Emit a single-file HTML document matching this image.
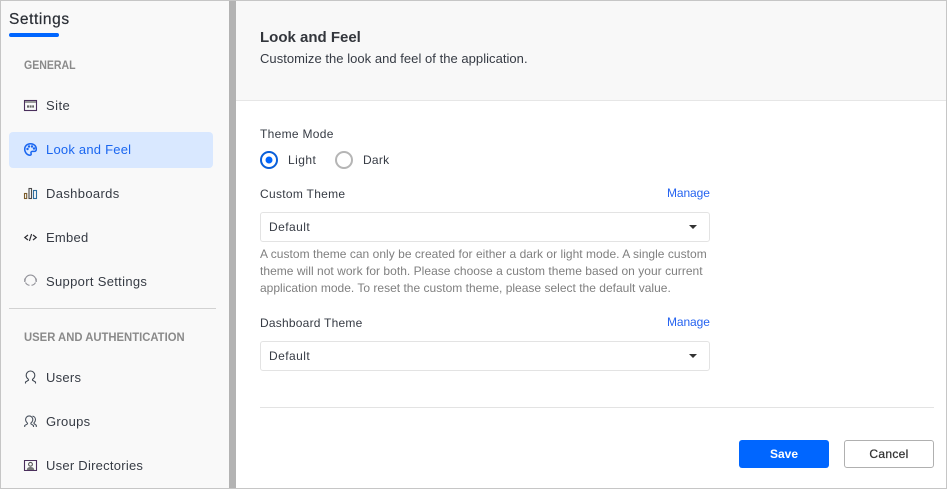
<!DOCTYPE html>
<html><head><meta charset="utf-8"><style>
html,body{margin:0;padding:0;width:947px;height:489px;overflow:hidden;background:#fff}
body{font-family:"Liberation Sans",sans-serif;color:#333;position:relative}
.a{position:absolute;white-space:nowrap}
.t{position:absolute;white-space:nowrap;line-height:16px;font-size:13px;letter-spacing:.3px;color:#363b44}
svg{position:absolute;overflow:visible}
.sel{position:absolute;left:260px;width:448px;height:28px;border:1px solid #e3e3e3;border-radius:3px;background:#fff}
.arr{position:absolute;left:689px;width:0;height:0;border-left:4.5px solid transparent;border-right:4.5px solid transparent;border-top:4.5px solid #333}
</style></head><body>
<div class="a" style="left:1px;top:1px;width:228px;height:487px;background:#f9f9f9"></div>
<div class="a" style="left:229px;top:1px;width:7px;height:487px;background:#b3b3b3"></div>
<div class="a" style="left:236px;top:1px;width:710px;height:99px;background:#f8f8f8"></div>
<div class="a" style="left:236px;top:100px;width:710px;height:1px;background:#e6e6e6"></div>
<div class="a" style="left:0;top:0;width:945px;height:487px;border:1px solid #c6c6c6"></div>

<div class="t" style="left:9px;top:11px;font-size:15.5px;line-height:18px;letter-spacing:.58px;color:#2b2f36;-webkit-text-stroke:.2px #2b2f36">Settings</div>
<div class="a" style="left:9px;top:33px;width:50px;height:4px;border-radius:2px;background:#0066ff"></div>
<div class="t" style="left:24px;top:57px;font-size:12px;font-weight:bold;letter-spacing:0;color:#8a8a8a;transform:scaleX(.88);transform-origin:0 50%">GENERAL</div>
<div class="a" style="left:9px;top:132px;width:204px;height:36px;border-radius:4px;background:#d9e8ff"></div>

<div class="t" style="left:46px;top:98px;letter-spacing:.45px">Site</div>
<div class="t" style="left:46px;top:142px;color:#1a66f0;letter-spacing:.22px">Look and Feel</div>
<div class="t" style="left:46px;top:186px;letter-spacing:.35px">Dashboards</div>
<div class="t" style="left:46px;top:230px;letter-spacing:.25px">Embed</div>
<div class="t" style="left:46px;top:274px;letter-spacing:.32px">Support Settings</div>
<div class="a" style="left:9px;top:308px;width:207px;height:1px;background:#d2d2d2"></div>
<div class="t" style="left:24px;top:329px;font-size:12px;font-weight:bold;letter-spacing:0;color:#8a8a8a;transform:scaleX(.94);transform-origin:0 50%">USER AND AUTHENTICATION</div>
<div class="t" style="left:46px;top:370px;letter-spacing:.25px">Users</div>
<div class="t" style="left:46px;top:414px;letter-spacing:.3px">Groups</div>
<div class="t" style="left:46px;top:458px;letter-spacing:.25px">User Directories</div>

<svg style="left:24px;top:99px" width="13" height="13" viewBox="0 0 13 13" fill="none"><rect x=".5" y="1.500" width="12" height="10" stroke="#4a2f5c" stroke-width="1.100"/><rect x="1" y="2" width="11" height="2" fill="#9a9a9a"/><path d="M3 7.500h7" stroke="#666" stroke-width="2.200" stroke-dasharray="2 .6"/></svg>
<svg style="left:24px;top:143px" width="13" height="13" viewBox="0 0 13 13" fill="none"><path d="M6.500.7C3 .7.7 3.200.7 6.300c0 3.200 2.600 5.900 5.300 5.900 1.400 0 1.300-1.200 1-2-.3-1 .3-1.800 1.400-1.800h1.800c1.300 0 2.100-.9 2.100-2.300C12.300 2.900 9.800.7 6.500.7z" stroke="#1a66f0" stroke-width="1.500"/><circle cx="3.500" cy="6" r="1.200" fill="#1a66f0"/><circle cx="5" cy="3.500" r="1.200" fill="#1a66f0"/><circle cx="8" cy="3.500" r="1.200" fill="#1a66f0"/><circle cx="10" cy="5.500" r="1.200" fill="#1a66f0"/></svg>
<svg style="left:24px;top:187px" width="13" height="13" viewBox="0 0 13 13" fill="none"><rect x=".5" y="6.500" width="2.200" height="5" stroke="#7a5c2c" stroke-width="1.100"/><rect x="5" y="1.500" width="2.500" height="10" stroke="#4a4a4a" stroke-width="1.100"/><rect x="9.500" y="3.500" width="3" height="8" stroke="#2f6f9f" stroke-width="1.100"/></svg>
<svg style="left:24px;top:231px" width="13" height="13" viewBox="0 0 13 13" fill="none" stroke="#2d2d33" stroke-width="1.200"><path d="M4 4 .8 6.500 4 9M9 4l3.200 2.500L9 9M7.600 3 5.400 10"/></svg>
<svg style="left:24px;top:273px" width="13" height="13" viewBox="0 0 13 13" fill="none" stroke="#93939a" stroke-width="1.100"><path d="M1.200 8.500A5.400 5.400 0 1 1 11.800 8.500"/><path d="M.7 5.500v3.500M12.300 5.500v3.500"/><path d="M1.500 9.500c.8 1.600 2.200 2.600 4 2.800M11.500 9.500c-.8 1.600-2.200 2.600-4 2.800"/></svg>
<svg style="left:24px;top:371px" width="13" height="13" viewBox="0 0 13 13" fill="none" stroke="#3f4752" stroke-width="1.100"><path d="M4.500 8.300C2.900 7.300 2.200 5.800 2.200 4.300a4.300 4.300 0 0 1 8.600 0c0 1.500-.7 3-2.300 4v.9l3 1.800v1.500M4.500 8.300v.9l-3 1.800v1.500"/></svg>
<svg style="left:24px;top:415px" width="13" height="13" viewBox="0 0 13 13" fill="none" stroke="#4c5460" stroke-width="1.100"><path d="M3.500 8C2.200 7 1.600 5.800 1.600 4.500a3.600 3.600 0 0 1 7.200 0c0 1.300-.6 2.500-1.900 3.500v.8l2.600 1.700V12M3.500 8v.8L.7 10.500V12"/><path d="M8.500 1.200a3.400 3.400 0 0 1 3 3.400c0 1.200-.5 2.200-1.500 3.200v.8l2.300 1.700V12"/></svg>
<svg style="left:24px;top:459px" width="13" height="13" viewBox="0 0 13 13" fill="none"><path d="M.5 1.500h12v10H.5z" stroke="#4a2f5c" stroke-width="1.100"/><circle cx="6.500" cy="5.300" r="1.900" stroke="#555" stroke-width="1.100"/><path d="M2.800 11c0-2 1.500-3 3.700-3s3.700 1 3.700 3z" fill="#777"/></svg>

<div class="t" style="left:260px;top:29px;font-size:15px;line-height:18px;font-weight:bold;letter-spacing:0;color:#33363c">Look and Feel</div>
<div class="t" style="left:260px;top:51px;letter-spacing:.035px">Customize the look and feel of the application.</div>

<div class="t" style="left:260px;top:126px;font-size:12px;letter-spacing:.3px">Theme Mode</div>
<svg style="left:260px;top:150px" width="20" height="20" viewBox="0 0 20 20" fill="none"><circle cx="9" cy="10" r="8" stroke="#0a5fd9" stroke-width="2"/><circle cx="9" cy="10" r="3.500" fill="#0066ff"/></svg>
<div class="t" style="left:288px;top:152px;font-size:12px;letter-spacing:.45px">Light</div>
<svg style="left:335px;top:150px" width="20" height="20" viewBox="0 0 20 20" fill="none"><circle cx="9" cy="10" r="8" stroke="#b5b5b5" stroke-width="2"/></svg>
<div class="t" style="left:363px;top:152px;font-size:12px;letter-spacing:.25px">Dark</div>

<div class="t" style="left:260px;top:186px;font-size:12px;letter-spacing:.3px">Custom Theme</div>
<div class="t" style="left:667px;top:185px;font-size:12px;letter-spacing:-.1px;color:#2563f0">Manage</div>
<div class="sel" style="top:212px"></div>
<div class="t" style="left:269px;top:219px;font-size:12px;letter-spacing:.45px">Default</div>
<div class="arr" style="top:225px"></div>
<div class="t" style="left:260px;top:246px;font-size:12px;letter-spacing:.03px;color:#7f7f7f">A custom theme can only be created for either a dark or light mode. A single custom</div>
<div class="t" style="left:260px;top:263px;font-size:12px;letter-spacing:.03px;color:#7f7f7f">theme will not work for both. Please choose a custom theme based on your current</div>
<div class="t" style="left:260px;top:280px;font-size:12px;letter-spacing:.01px;color:#7f7f7f">application mode. To reset the custom theme, please select the default value.</div>

<div class="t" style="left:260px;top:315px;font-size:12px;letter-spacing:.22px">Dashboard Theme</div>
<div class="t" style="left:667px;top:314px;font-size:12px;letter-spacing:-.1px;color:#2563f0">Manage</div>
<div class="sel" style="top:341px"></div>
<div class="t" style="left:269px;top:348px;font-size:12px;letter-spacing:.45px">Default</div>
<div class="arr" style="top:354px"></div>

<div class="a" style="left:260px;top:407px;width:674px;height:1px;background:#e3e3e3"></div>
<div class="a" style="left:739px;top:440px;width:90px;height:28px;border-radius:3px;background:#0066ff;color:#fff;font-size:12px;font-weight:bold;line-height:29px;text-align:center">Save</div>
<div class="a" style="left:844px;top:440px;width:88px;height:26px;border:1px solid #b0b0b0;border-radius:3px;background:#fff;color:#333;font-size:12px;letter-spacing:.3px;line-height:27px;text-align:center;-webkit-text-stroke:.25px #333">Cancel</div>
</body></html>
